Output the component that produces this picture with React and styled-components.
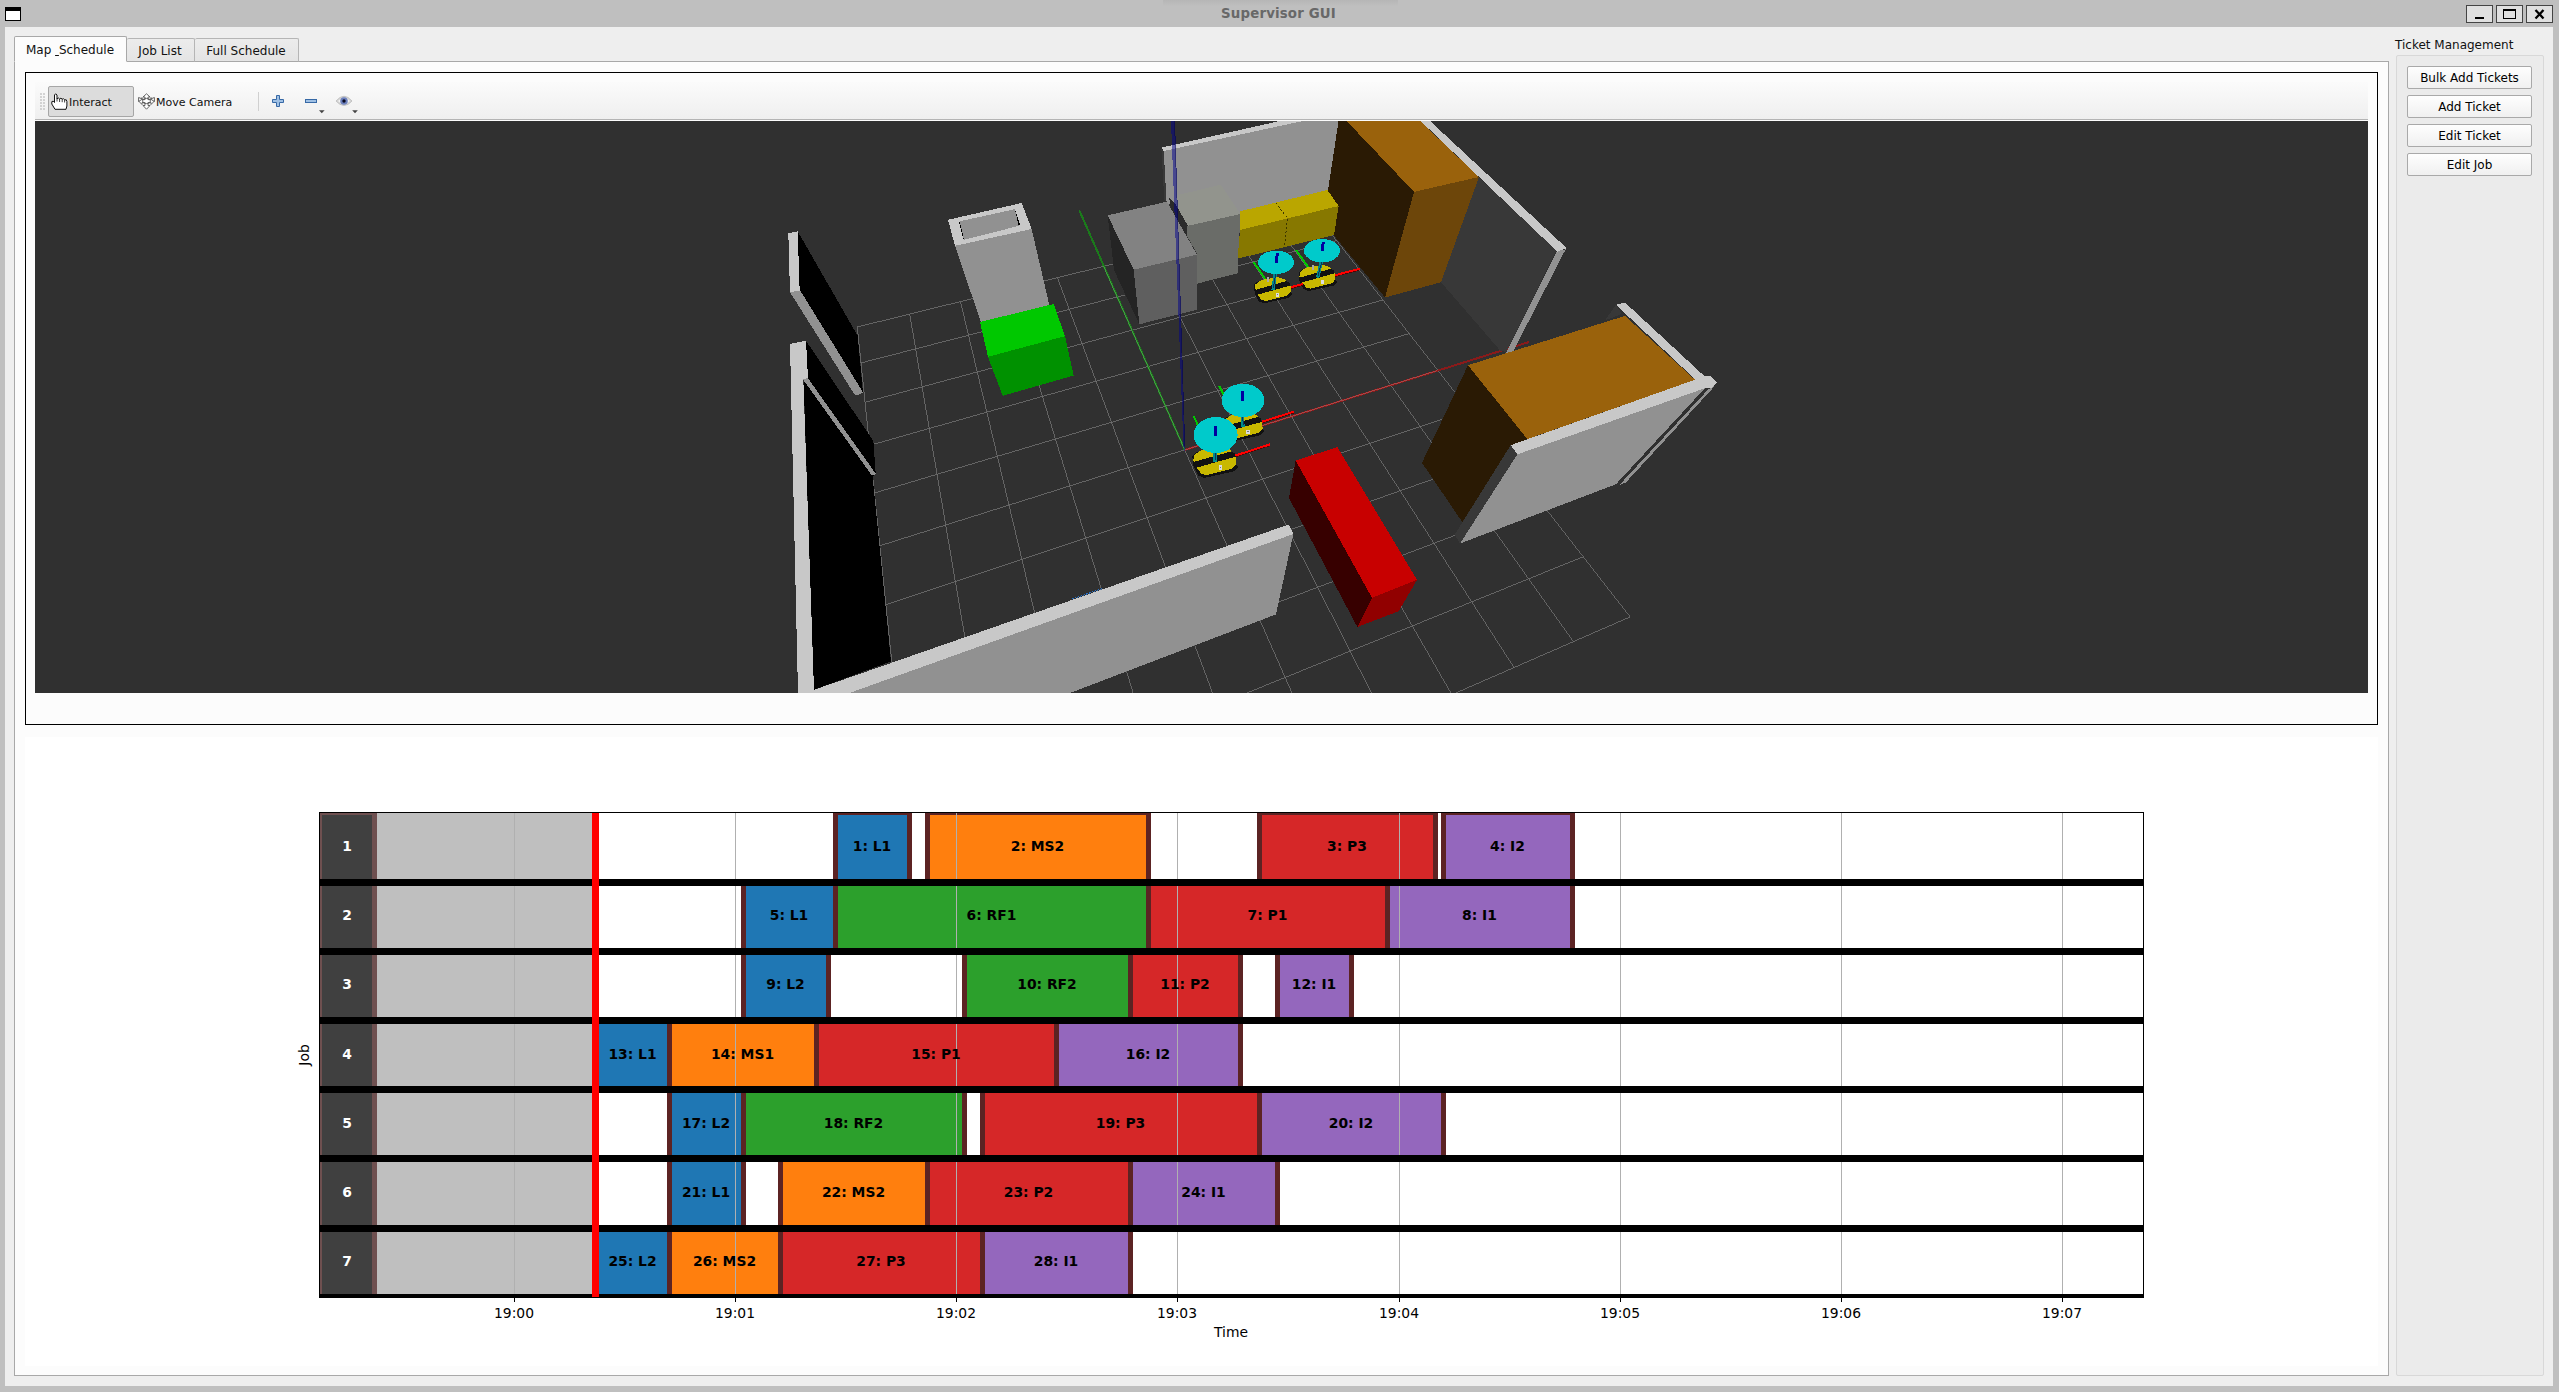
import React from "react";
import styled, { createGlobalStyle } from "styled-components";

const Global = createGlobalStyle`
  * { box-sizing: border-box; }
  body { margin: 0; overflow: hidden; }
`;

const Window = styled.div`
  width: 2559px;
  height: 1392px;
  display: flex;
  flex-direction: column;
  padding: 0 6px 6px 5px;
  background: #bfbfbf;
  color: #111;
  font: 12px "DejaVu Sans", sans-serif;
`;

const TitleBar = styled.header`
  height: 27px;
  flex: none;
  display: grid;
  grid-template-columns: 87px 1fr 87px;
  align-items: center;
  background: linear-gradient(#b6b6b6, #bfbfbf 6px) 1158px 0 / 235px 8px no-repeat;
`;

const WindowGlyph = styled.span`
  width: 16px;
  height: 14px;
  margin-top: 1px;
  border: 1px solid #000;
  border-top-width: 4px;
  background: #fff;
`;

const Title = styled.h1`
  margin: 0;
  padding-right: 1px;
  font-size: 13.33px;
  line-height: 26px;
  font-weight: bold;
  text-align: center;
  letter-spacing: 0.17px;
  color: #686868;
`;

const WindowButtons = styled.div`
  display: flex;
  gap: 3px;
  margin-top: 1px;
`;

const WindowButton = styled.button`
  width: 27px;
  height: 18px;
  padding: 0;
  border: 1px solid #444;
  background: #e0e0e0;
  display: flex;
  align-items: center;
  justify-content: center;
`;

const Content = styled.main`
  flex: 1;
  min-height: 0;
  display: flex;
  gap: 6px;
  padding: 9px 9px 10px 9px;
  background: #eeeeee;
`;

const TabView = styled.section`
  width: 2375px;
  flex: none;
  display: flex;
  flex-direction: column;
`;

const TabRow = styled.nav`
  display: flex;
  align-items: flex-end;
  height: 26px;
  margin-bottom: -1px;
  z-index: 1;
`;

const Tab = styled.div`
  width: ${(p) => p.$width}px;
  height: ${(p) => (p.$active ? 26 : 24)}px;
  display: flex;
  align-items: center;
  justify-content: center;
  padding: ${(p) => (p.$active ? "1px 1px 0 0" : "2px 1px 0 0")};
  border: 1px solid ${(p) => (p.$active ? "#a8a8a8" : "#b5b5b5")};
  border-left-width: ${(p) => (p.$active ? 1 : 0)}px;
  border-bottom-color: ${(p) => (p.$active ? "#fcfcfc" : "#a8a8a8")};
  border-radius: 2px 2px 0 0;
  background: ${(p) => (p.$active ? "#fcfcfc" : "linear-gradient(#ececec, #e4e4e4)")};
`;

const TabPane = styled.div`
  flex: 1;
  min-height: 0;
  display: flex;
  flex-direction: column;
  gap: 12px;
  padding: 10px 10px 9px;
  border: 1px solid #a8a8a8;
  background: #fcfcfc;
`;

const MapFrame = styled.div`
  height: 653px;
  flex: none;
  padding: 9px;
  border: 1px solid #000;
`;

const Toolbar = styled.div`
  height: 39px;
  display: flex;
  align-items: center;
  padding-left: 4px;
  background: linear-gradient(#fbfbfb, #efefef 37px, #b4b4b4 37px, #b4b4b4 38px, #fcfcfc 38px);
  font-size: 11px;
`;

const Grip = styled.span`
  width: 5px;
  height: 17px;
  margin: 0 3px 1px 1px;
  background: radial-gradient(circle at 1px 1px, #c0c0c0 0.6px, transparent 0.9px) 0 0 / 3px 3px;
`;

const Tool = styled.div`
  width: ${(p) => p.$width}px;
  height: 31px;
  display: flex;
  align-items: center;
  gap: 1px;
  padding-left: 2px;
  border: 1px solid ${(p) => (p.$pressed ? "#a6a6a6" : "transparent")};
  border-radius: 2px;
  background: ${(p) => (p.$pressed ? "#dcdcdc" : "transparent")};

  & + & { margin-left: 1px; }
`;

const ToolLabel = styled.span`
  padding-top: 2px;
`;

const Divider = styled.span`
  width: 1px;
  height: 19px;
  margin-right: 13px;
  background: #d0d0d0;
`;

const ToolIcon = styled.div`
  width: ${(p) => p.$width || 33}px;
  height: 25px;
  display: flex;
`;

const Scene = styled.svg`
  display: block;
  width: 2333px;
  height: 572px;
  background: #303030;
`;

const Chart = styled.svg`
  display: block;
  width: 2353px;
  height: 629px;
  background: #fff;
  font-family: "DejaVu Sans", sans-serif;
  font-size: 13.89px;
`;

const Side = styled.aside`
  flex: 1;
  display: flex;
  flex-direction: column;
`;

const SideTitle = styled.h2`
  margin: 0 0 1px;
  height: 18px;
  line-height: 19px;
  font-size: 12px;
  font-weight: normal;
  white-space: nowrap;
`;

const ButtonGroup = styled.div`
  flex: 1;
  margin-left: 1px;
  display: flex;
  flex-direction: column;
  gap: 6px;
  padding: 10px;
  border: 1px solid #d8d8d8;
  border-radius: 2px;
  background: #ebebeb;
`;

const TicketButton = styled.button`
  width: 125px;
  height: 23px;
  padding: 0;
  border: 1px solid #a9a9a9;
  border-radius: 2px;
  background: linear-gradient(#fefefe, #f0f0f0);
  color: #000;
  font: 12px "DejaVu Sans", sans-serif;
`;

/* ---------- toolbar icons ---------- */

const HandIcon = () => (
  <svg width="17" height="17" viewBox="0 0 17 17" fill="#fff" stroke="#111">
    <path d="M3.5 9.5 V2 Q4.5 -.4 6 2 V6 Q7.2 3.8 8.5 6 Q10 4.2 11.2 6.2 Q12.6 4.8 13.6 6.8 Q15.8 6 15.9 8.5 V13 L15 16.3 H4 L0.8 11 Q0.2 7.6 2.2 8.2 Z" />
    <path d="M6 5.5 V8.5 M8.6 5.8 V9 M11.2 6.2 V9.2 M13.6 7 V9.5" fill="none" strokeWidth=".8" />
  </svg>
);

const MoveIcon = () => (
  <svg width="17" height="17" viewBox="0 0 17 17" fill="#fff" stroke="#555" strokeWidth="0.9">
    <path d="M8.5 .8 L12 4 H10 V6.6 H13 V4.5 L16.4 8 L13 11.5 V9.6 H10 V12.5 H12 L8.5 16.2 L5 12.5 H7 V9.6 H4 V11.5 L.6 8 L4 4.5 V6.6 H7 V4 H5 Z" />
    <ellipse cx="8.5" cy="8" rx="4" ry="2.6" fill="none" />
    <path d="M.6 4.5 V8.5 L4.5 6 Z M16.4 4.5 V8.5 L12.5 6 Z" />
  </svg>
);

const PlusIcon = () => (
  <svg width="12" height="18" viewBox="0 -6 12 18">
    <path d="M4.5 .5 H7.5 V4.5 H11.5 V7.5 H7.5 V11.5 H4.5 V7.5 H.5 V4.5 H4.5 Z" fill="#9fc0e4" stroke="#3769a6" />
  </svg>
);

const MinusIcon = () => (
  <svg width="21" height="25" viewBox="0 0 21 25">
    <rect x=".5" y="10.5" width="11" height="3" fill="#9fc0e4" stroke="#3769a6" />
    <path d="M14 21.2 H19.6 L16.8 24.2 Z" fill="#444" />
  </svg>
);

const EyeIcon = () => (
  <svg width="23" height="25" viewBox="0 0 23 25">
    <path d="M0 12 Q8 2.5 16 12 Q8 21 0 12 Z" fill="#d6d6d6" stroke="#b4b4b4" strokeWidth=".7" />
    <path d="M2 12 Q8 6 14 12 Q8 17.5 2 12 Z" fill="#f4f4f4" />
    <circle cx="8" cy="12" r="3.8" fill="#6c80bd" />
    <circle cx="8" cy="12" r="1.7" fill="#080820" />
    <path d="M16.2 21.2 H21.8 L19 24.2 Z" fill="#444" />
  </svg>
);

/* ---------- 3D map ---------- */

// Ground plane coordinates run from -1 to 1 on both axes, origin at the map frame.
const ground = (a, b) => {
  const w = 1 + 0.093 * a - 0.2457 * b;
  return [
    (1184.7 + 386.7 * a - 190.2 * b) / w,
    (449.8 - 45.2 * a + 118.1 * b) / w,
  ];
};

const GridLine = ({ from, to }) => {
  const [x1, y1] = ground(...from);
  const [x2, y2] = ground(...to);
  return <line x1={x1} y1={y1} x2={x2} y2={y2} />;
};

const steps = Array.from({ length: 11 }, (_, i) => i / 5 - 1);

const LIGHT = "#c8c8c8";
const MID = "#919191";
const SHADE = "#383838";

const Shape = ({ p, c }) => <polygon points={p} fill={c} />;

const LeftArea = () => (
  <g transform="translate(760 110) scale(.33333 .38265)">
    <Shape p="113,317 293,590 309,740 119,472" c="#000" />
    <Shape p="85,322 113,317 119,472 90,476" c={LIGHT} />
    <Shape p="90,476 121,472 309,738 296,744 284,744" c={MID} />
    <Shape p="138,603 340,865 347,950 338,960 393,1441 162,1515 131,708" c="#000" />
    <Shape p="90,611 138,603 144,700 130,704 162,1515 162,1524 114,1524" c={LIGHT} />
    <Shape p="129,704 143,700 347,950 343,955 334,953" c={MID} />
    <Shape p="564,287 785,243 815,311 585,355" c={LIGHT} />
    <Shape p="597,293 765,261 780,300 610,337" c="#000" />
    <Shape p="599,291 765,259 776,303 612,339" c={MID} />
    <Shape p="585,355 815,311 868,510 663,555" c={MID} />
    <Shape p="660,554 881,507 915,591 684,645" c="#00c800" />
    <Shape p="684,645 915,591 941,694 728,747" c="#009100" />
  </g>
);

const BackArea = () => (
  <g transform="translate(1060 110) scale(.33333)">
    <Shape p="304,115 311,124 320,278 313,270" c={SHADE} />
    <Shape p="311,122 738,31 836,31 804,245 540,310 320,280" c={MID} />
    <Shape p="304,113 668,31 738,31 311,123" c={LIGHT} />
    <Shape p="327,261 382,345 382,382 335,310" c="#2b2b2b" />
    <Shape p="355,255 482,224 541,312 382,348 340,283" c="#92948d" />
    <Shape p="327,261 345,280 384,348 384,382 335,310" c="#2b2b2b" />
    <Shape p="382,348 541,312 533,490 411,521 411,430 382,380" c="#6a6c68" />
    <Shape p="143,316 321,275 411,434 221,479" c="#828282" />
    <Shape p="143,316 221,479 238,643 162,480" c="#242424" />
    <Shape p="221,479 411,434 411,599 238,643" c="#5f5f5f" />
  </g>
);

const RightArea = () => (
  <g transform="translate(1260 110) scale(.33333 .38265)">
    <Shape p="655,175 890,366 738,632 722,630 543,450" c={SHADE} />
    <Shape p="236,27 262,27 462,214 375,490 222,328 203,215" c="#2a1a04" />
    <Shape p="258,27 478,27 657,175 462,214" c="#9a620c" />
    <Shape p="462,214 657,175 543,450 375,490" c="#6d460a" />
    <Shape p="890,369 917,364 760,630 738,635" c={MID} />
    <Shape p="480,27 508,27 920,361 892,370 657,175" c={LIGHT} />
    <Shape p="1068,509 1085,533 1035,550" c={SHADE} />
    <Shape p="624,667 1095,538 1305,705 802,860" c="#9a620c" />
    <Shape p="624,667 802,860 752,880 607,1077 486,922" c="#2a1a04" />
    <Shape p="1068,509 1095,503 1335,697 1308,706" c={LIGHT} />
    <Shape p="752,876 774,900 600,1133 584,1110" c={SHADE} />
    <Shape p="772,900 1335,727 1068,978 600,1133" c={MID} />
    <Shape p="1345,730 1368,718 1098,973 1076,982" c={MID} />
    <Shape p="752,876 1330,697 1352,695 1371,713 1355,727 1335,727 772,900" c={LIGHT} />
    <Shape p="107,916 232,881 471,1228 336,1275" c="#c80000" />
    <Shape p="107,916 336,1275 292,1351 87,1014" c="#370000" />
    <Shape p="336,1275 471,1228 416,1310 292,1351" c="#910000" />
  </g>
);

const ROBOTS = [
  { x: 772, y: 503, s: 0.84, disc: [786, 422, 54, 35], red: [820, 497, 900, 476], green: [708, 420, 752, 482] },
  { x: 638, y: 540, s: 0.84, disc: [648, 457, 54, 35], red: [692, 532, 728, 522], green: [580, 455, 622, 516] },
  { x: 548, y: 950, s: 0.92, disc: [549, 871, 64, 50], red: [600, 937, 702, 905], green: [478, 828, 494, 860] },
  { x: 464, y: 1056, s: 1, disc: [467, 975, 66, 54], red: [525, 1037, 630, 1003], green: [401, 919, 416, 950] },
];

const Robot = ({ x, y, s, disc, red, green }) => {
  const [cx, cy, rx, ry] = disc;
  return (
    <g>
      <line x1={green[0]} y1={green[1]} x2={green[2]} y2={green[3]} stroke="#00c800" strokeWidth="6" />
      <line x1={red[0]} y1={red[1] + 2} x2={red[2]} y2={red[3] + 2} stroke="#500" strokeWidth="6" />
      <line x1={red[0]} y1={red[1]} x2={red[2]} y2={red[3]} stroke="#f00" strokeWidth="6" />
      <g transform={`translate(${x} ${y}) scale(${s})`}>
        <Shape p="-67,-18 -55,-30 20,-44 60,-26 64,8 72,14 58,28 -32,48 -50,40 -64,12" c="#111" />
        <Shape p="-64,-4 -62,-20 -40,-36 20,-46 44,-38 50,-32 -60,-1" c="#c8b800" />
        <Shape p="-54,16 64,-16 65,6 52,20 -24,39 -40,36" c="#c8b800" />
        <Shape p="-60,-1 52,-30 63,-16 -54,17" c="#111" />
        <Shape p="12,10 23,10 23,24 12,24" c="#ddd" />
        <Shape p="15,14 20,14 20,17 15,17" c="#777" />
      </g>
      {s < 0.9 && <rect x={x - 17} y={y - 38} width="7" height="14" fill="#aaa" />}
      <line x1={x + 1} y1={y} x2={cx - 2} y2={cy + ry - 2} stroke="#008a8c" strokeWidth="10" />
      <line x1={x + 2} y1={y - 6} x2={cx - 1} y2={cy + ry} stroke="#10305c" strokeWidth="3" />
      <ellipse cx={cx} cy={cy} rx={rx} ry={ry} fill="#00cacb" />
      <line x1={cx} y1={cy + 2} x2={cx + (s < 0.9 ? 4 : 0)} y2={cy - 27} stroke="#0000a0" strokeWidth="9" />
    </g>
  );
};

const MapScene = () => (
  <Scene viewBox="35 121 2333 572" shapeRendering="crispEdges">
    <g stroke="#727272" strokeWidth=".8">
      {steps.map((t) => (
        <React.Fragment key={t}>
          <GridLine from={[t, -1]} to={[t, 1]} />
          <GridLine from={[-1, t]} to={[1, t]} />
        </React.Fragment>
      ))}
    </g>
    <line x1="1079.3" y1="210.3" x2="1184.7" y2="449.8" stroke="#1b7a1b" strokeWidth="2" />
    <line x1="1103.5" y1="266" x2="1184.7" y2="449.8" stroke="#4f9a4f" strokeWidth=".8" />
    <line x1="1184.7" y1="450" x2="1529" y2="342" stroke="#8a1a1a" strokeWidth="2" />
    <line x1="1184.7" y1="450" x2="1437" y2="370.6" stroke="#ac5454" strokeWidth=".8" />
    <LeftArea />
    <Shape p="848,693 1293.3,534 1276,614.4 1070,693" c={MID} />
    <Shape p="814,689.8 1288.7,524.5 1293.3,534 848,693.5 813,693.5" c={LIGHT} />
    <line x1="1071.7" y1="599.2" x2="1102.7" y2="588.4" stroke="#2a6fc0" strokeWidth="1" strokeDasharray="2 1" />
    <BackArea />
    <RightArea />
    <g transform="translate(1060 110) scale(.33333)">
      <Shape p="540,304 802,240 836,288 540,360" c="#baa600" />
      <Shape p="540,360 836,288 822,375 533,446" c="#877800" />
      <path d="M648 278 L682 325 L674 408" fill="none" stroke="#3c3600" strokeWidth="3" strokeDasharray="6 6" />
      {ROBOTS.map((r) => (
        <Robot key={r.x} {...r} />
      ))}
      <Shape p="333,31 345,31 376,1022 371,1022" c="rgba(0,0,142,.5)" />
      <Shape p="342,31 345,31 376,1022 374,1022" c="rgba(0,0,60,.35)" />
    </g>
  </Scene>
);

/* ---------- Gantt chart ---------- */

const L = "#1f77b4";
const MS = "#ff7f0e";
const RF = "#2ca02c";
const P = "#d62728";
const I = "#9467bd";

const JOBS = [
  { top: 813, bottom: 879, text: 846, tasks: [["1: L1", 833, 907, L], ["2: MS2", 925, 1146, MS], ["3: P3", 1257, 1433, P], ["4: I2", 1441, 1570, I]] },
  { top: 886, bottom: 948, text: 915, tasks: [["5: L1", 741, 833, L], ["6: RF1", 833, 1146, RF], ["7: P1", 1146, 1385, P], ["8: I1", 1385, 1570, I]] },
  { top: 955, bottom: 1017, text: 984, tasks: [["9: L2", 741, 826, L], ["10: RF2", 962, 1128, RF], ["11: P2", 1128, 1238, P], ["12: I1", 1275, 1349, I]] },
  { top: 1024, bottom: 1086, text: 1054, tasks: [["13: L1", 594, 667, L], ["14: MS1", 667, 814, MS], ["15: P1", 814, 1054, P], ["16: I2", 1054, 1238, I]] },
  { top: 1093, bottom: 1155, text: 1123, tasks: [["17: L2", 667, 741, L], ["18: RF2", 741, 962, RF], ["19: P3", 980, 1257, P], ["20: I2", 1257, 1441, I]] },
  { top: 1162, bottom: 1225, text: 1192, tasks: [["21: L1", 667, 741, L], ["22: MS2", 778, 925, MS], ["23: P2", 925, 1128, P], ["24: I1", 1128, 1275, I]] },
  { top: 1232, bottom: 1294, text: 1261, tasks: [["25: L2", 594, 667, L], ["26: MS2", 667, 778, MS], ["27: P3", 778, 980, P], ["28: I1", 980, 1128, I]] },
];

const TICKS = [514, 735, 956, 1177, 1399, 1620, 1841, 2062];
const EDGE = "#5c2323";

const Gantt = () => (
  <Chart viewBox="25 737 2353 629">
    <g shapeRendering="crispEdges">
      {JOBS.map(({ top, bottom, tasks }, row) => {
        const inset = row === 0 ? 2 : 0;
        return (
          <g key={top}>
            <rect x="320" y={top} width="57" height={bottom - top} fill="#6f5050" />
            <rect x="322" y={top + inset} width="50" height={bottom - top - inset} fill="#404040" />
            <rect x="377" y={top} width="215" height={bottom - top} fill="#bfbfbf" />
            {tasks.map(([name, start, end, color]) => (
              <g key={name}>
                <rect x={start} y={top} width={end + 5 - start} height={bottom - top} fill={EDGE} />
                <rect x={start + 5} y={top + inset} width={end - start - 5} height={bottom - top - inset} fill={color} />
              </g>
            ))}
          </g>
        );
      })}
      {TICKS.map((x) => (
        <rect key={x} x={x} y="813" width="1" height="482" fill="#b0b0b0" />
      ))}
      {JOBS.map(({ bottom }, row) => (
        <rect key={bottom} x="319" y={bottom} width="1825" height={row === 6 ? 4 : 7} fill="#000" />
      ))}
      <rect x="319.5" y="812.5" width="1824" height="485" fill="none" stroke="#000" />
      <rect x="592" y="813" width="7" height="484" fill="#f00" />
      {TICKS.map((x) => (
        <rect key={x} x={x} y="1298" width="1" height="4" fill="#000" />
      ))}
    </g>
    <g textAnchor="middle" fontWeight="bold">
      {JOBS.map(({ text, tasks }, row) => (
        <React.Fragment key={text}>
          <text x="347" y={text + 5} fill="#fff">{row + 1}</text>
          {tasks.map(([name, start, end]) => (
            <text key={name} x={(start + end) / 2 + 2} y={text + 5}>{name}</text>
          ))}
        </React.Fragment>
      ))}
    </g>
    <g textAnchor="middle">
      {TICKS.map((x, i) => (
        <text key={x} x={x} y="1318">{`19:0${i}`}</text>
      ))}
      <text x="1231" y="1337">Time</text>
      <text transform="translate(309 1055) rotate(-90)">Job</text>
    </g>
  </Chart>
);

export default function App() {
  return (
    <Window>
      <Global />
      <TitleBar>
        <WindowGlyph />
        <Title>Supervisor GUI</Title>
        <WindowButtons>
          <WindowButton>
            <svg width="25" height="16"><rect x="8" y="11" width="9" height="2" /></svg>
          </WindowButton>
          <WindowButton>
            <svg width="25" height="16"><path d="M6 3 H19 V13 H6 Z M7 5 V12 H18 V5 Z" fillRule="evenodd" /></svg>
          </WindowButton>
          <WindowButton>
            <svg width="25" height="16"><path d="M8.5 4 L16.5 12.5 M16.5 4 L8.5 12.5" stroke="#000" strokeWidth="2.3" /></svg>
          </WindowButton>
        </WindowButtons>
      </TitleBar>
      <Content>
        <TabView>
          <TabRow>
            <Tab $width={113} $active><span>Map&nbsp;<u>&nbsp;</u>Schedule</span></Tab>
            <Tab $width={68}>Job List</Tab>
            <Tab $width={104}>Full Schedule</Tab>
          </TabRow>
          <TabPane>
            <MapFrame>
              <Toolbar>
                <Grip />
                <Tool $width={86} $pressed><HandIcon /><ToolLabel>Interact</ToolLabel></Tool>
                <Tool $width={123}><MoveIcon /><ToolLabel>Move Camera</ToolLabel></Tool>
                <Divider />
                <ToolIcon><PlusIcon /></ToolIcon>
                <ToolIcon $width={31}><MinusIcon /></ToolIcon>
                <ToolIcon><EyeIcon /></ToolIcon>
              </Toolbar>
              <MapScene />
            </MapFrame>
            <Gantt />
          </TabPane>
        </TabView>
        <Side>
          <SideTitle>Ticket Management</SideTitle>
          <ButtonGroup>
            <TicketButton>Bulk Add Tickets</TicketButton>
            <TicketButton>Add Ticket</TicketButton>
            <TicketButton>Edit Ticket</TicketButton>
            <TicketButton>Edit Job</TicketButton>
          </ButtonGroup>
        </Side>
      </Content>
    </Window>
  );
}
